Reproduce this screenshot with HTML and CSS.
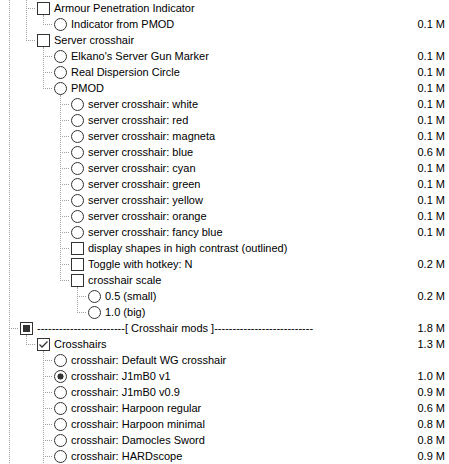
FILE: index.html
```html
<!DOCTYPE html>
<html lang="en">
<head>
    <meta charset="UTF-8">
    <title>Select Components</title>
    <link rel="stylesheet" href="styles.css">
</head>
<body>
    <div class="component-tree">
        <!-- Armour penetration -->
        <div class="row"><span class="g v"></span><span class="g t"></span><span class="mark kids"><span class="box chk"></span></span><span class="label">Armour Penetration Indicator</span></div>
        <div class="row"><span class="g v"></span><span class="g v"></span><span class="g l"></span><span class="mark"><span class="box radio"></span></span><span class="label">Indicator from PMOD</span><span class="size">0.1 M</span></div>

        <!-- Server crosshair -->
        <div class="row"><span class="g v"></span><span class="g l"></span><span class="mark kids"><span class="box chk"></span></span><span class="label">Server crosshair</span></div>
        <div class="row"><span class="g v"></span><span class="g"></span><span class="g t"></span><span class="mark"><span class="box radio"></span></span><span class="label">Elkano's Server Gun Marker</span><span class="size">0.1 M</span></div>
        <div class="row"><span class="g v"></span><span class="g"></span><span class="g t"></span><span class="mark"><span class="box radio"></span></span><span class="label">Real Dispersion Circle</span><span class="size">0.1 M</span></div>
        <div class="row"><span class="g v"></span><span class="g"></span><span class="g l"></span><span class="mark kids"><span class="box radio"></span></span><span class="label">PMOD</span><span class="size">0.1 M</span></div>
        <div class="row"><span class="g v"></span><span class="g"></span><span class="g"></span><span class="g t"></span><span class="mark"><span class="box radio"></span></span><span class="label">server crosshair: white</span><span class="size">0.1 M</span></div>
        <div class="row"><span class="g v"></span><span class="g"></span><span class="g"></span><span class="g t"></span><span class="mark"><span class="box radio"></span></span><span class="label">server crosshair: red</span><span class="size">0.1 M</span></div>
        <div class="row"><span class="g v"></span><span class="g"></span><span class="g"></span><span class="g t"></span><span class="mark"><span class="box radio"></span></span><span class="label">server crosshair: magneta</span><span class="size">0.1 M</span></div>
        <div class="row"><span class="g v"></span><span class="g"></span><span class="g"></span><span class="g t"></span><span class="mark"><span class="box radio"></span></span><span class="label">server crosshair: blue</span><span class="size">0.6 M</span></div>
        <div class="row"><span class="g v"></span><span class="g"></span><span class="g"></span><span class="g t"></span><span class="mark"><span class="box radio"></span></span><span class="label">server crosshair: cyan</span><span class="size">0.1 M</span></div>
        <div class="row"><span class="g v"></span><span class="g"></span><span class="g"></span><span class="g t"></span><span class="mark"><span class="box radio"></span></span><span class="label">server crosshair: green</span><span class="size">0.1 M</span></div>
        <div class="row"><span class="g v"></span><span class="g"></span><span class="g"></span><span class="g t"></span><span class="mark"><span class="box radio"></span></span><span class="label">server crosshair: yellow</span><span class="size">0.1 M</span></div>
        <div class="row"><span class="g v"></span><span class="g"></span><span class="g"></span><span class="g t"></span><span class="mark"><span class="box radio"></span></span><span class="label">server crosshair: orange</span><span class="size">0.1 M</span></div>
        <div class="row"><span class="g v"></span><span class="g"></span><span class="g"></span><span class="g t"></span><span class="mark"><span class="box radio"></span></span><span class="label">server crosshair: fancy blue</span><span class="size">0.1 M</span></div>
        <div class="row"><span class="g v"></span><span class="g"></span><span class="g"></span><span class="g t"></span><span class="mark"><span class="box chk"></span></span><span class="label">display shapes in high contrast (outlined)</span></div>
        <div class="row"><span class="g v"></span><span class="g"></span><span class="g"></span><span class="g t"></span><span class="mark"><span class="box chk"></span></span><span class="label">Toggle with hotkey: N</span><span class="size">0.2 M</span></div>
        <div class="row"><span class="g v"></span><span class="g"></span><span class="g"></span><span class="g l"></span><span class="mark kids"><span class="box chk"></span></span><span class="label">crosshair scale</span></div>
        <div class="row"><span class="g v"></span><span class="g"></span><span class="g"></span><span class="g"></span><span class="g t"></span><span class="mark"><span class="box radio"></span></span><span class="label">0.5 (small)</span><span class="size">0.2 M</span></div>
        <div class="row"><span class="g v"></span><span class="g"></span><span class="g"></span><span class="g"></span><span class="g l"></span><span class="mark"><span class="box radio"></span></span><span class="label">1.0 (big)</span></div>

        <!-- Crosshair mods -->
        <div class="row"><span class="g t"></span><span class="mark kids"><span class="box chk partial"></span></span><span class="label">------------------------[ Crosshair mods ]---------------------------</span><span class="size">1.8 M</span></div>
        <div class="row"><span class="g v"></span><span class="g l"></span><span class="mark kids"><span class="box chk">
            <svg width="11" height="11" viewBox="0 0 11 11"><polyline points="1.5,5.5 4,8 9.5,2.5" fill="none" stroke="#333" stroke-width="1.3"/></svg>
        </span></span><span class="label">Crosshairs</span><span class="size">1.3 M</span></div>
        <div class="row"><span class="g v"></span><span class="g"></span><span class="g t"></span><span class="mark"><span class="box radio"></span></span><span class="label">crosshair: Default WG crosshair</span></div>
        <div class="row"><span class="g v"></span><span class="g"></span><span class="g t"></span><span class="mark"><span class="box radio on"></span></span><span class="label">crosshair: J1mB0 v1</span><span class="size">1.0 M</span></div>
        <div class="row"><span class="g v"></span><span class="g"></span><span class="g t"></span><span class="mark"><span class="box radio"></span></span><span class="label">crosshair: J1mB0 v0.9</span><span class="size">0.9 M</span></div>
        <div class="row"><span class="g v"></span><span class="g"></span><span class="g t"></span><span class="mark"><span class="box radio"></span></span><span class="label">crosshair: Harpoon regular</span><span class="size">0.6 M</span></div>
        <div class="row"><span class="g v"></span><span class="g"></span><span class="g t"></span><span class="mark"><span class="box radio"></span></span><span class="label">crosshair: Harpoon minimal</span><span class="size">0.8 M</span></div>
        <div class="row"><span class="g v"></span><span class="g"></span><span class="g t"></span><span class="mark"><span class="box radio"></span></span><span class="label">crosshair: Damocles Sword</span><span class="size">0.8 M</span></div>
        <div class="row"><span class="g v"></span><span class="g"></span><span class="g t"></span><span class="mark"><span class="box radio"></span></span><span class="label">crosshair: HARDscope</span><span class="size">0.9 M</span></div>
    </div>
</body>
</html>
```

FILE: styles.css
```css
body {
    margin: 0;
    background: #fff;
    font-family: Tahoma, "Liberation Sans", Arial, sans-serif;
    font-size: 11px;
    color: #000;
    overflow: hidden;
}

.component-tree {
    padding-left: 1px;
}

.row {
    display: flex;
    align-items: flex-start;
    height: 16px;
    line-height: 16px;
    white-space: nowrap;
}

/* Tree guide cells: v = straight line, t = tee, l = elbow */
.g {
    flex: none;
    width: 17px;
    height: 16px;
    background-repeat: no-repeat;
}
.g.v {
    background: repeating-linear-gradient(to bottom, #a0a0a0 0 1px, transparent 1px 2px) 8px 0 / 1px 16px no-repeat;
}
.g.t {
    background:
        repeating-linear-gradient(to bottom, #a0a0a0 0 1px, transparent 1px 2px) 8px 0 / 1px 16px no-repeat,
        repeating-linear-gradient(to right, #a0a0a0 0 1px, transparent 1px 2px) 10px 8px / 7px 1px no-repeat;
}
.g.l {
    background:
        repeating-linear-gradient(to bottom, #a0a0a0 0 1px, transparent 1px 2px) 8px 0 / 1px 9px no-repeat,
        repeating-linear-gradient(to right, #a0a0a0 0 1px, transparent 1px 2px) 10px 8px / 7px 1px no-repeat;
}

/* Check / radio mark */
.mark {
    flex: none;
    width: 13px;
    height: 16px;
    margin-left: 2px;
}
.mark.kids {
    background: repeating-linear-gradient(to bottom, #a0a0a0 0 1px, transparent 1px 2px) 6px 15px / 1px 1px no-repeat;
}
.box {
    display: block;
    box-sizing: border-box;
    width: 13px;
    height: 13px;
    margin-top: 2px;
    border: 1px solid #333;
    background: #fff;
}
.box svg {
    display: block;
}
.box.partial {
    background: #fff;
    box-shadow: inset 0 0 0 2px #fff, inset 0 0 0 6px #333;
}
.box.radio {
    border-radius: 50%;
}
.box.radio.on {
    background: radial-gradient(circle, #333 0 2.8px, #fff 3.3px);
}

.label {
    margin-left: 4px;
}

.size {
    margin-left: auto;
    padding-right: 4px;
}
```
